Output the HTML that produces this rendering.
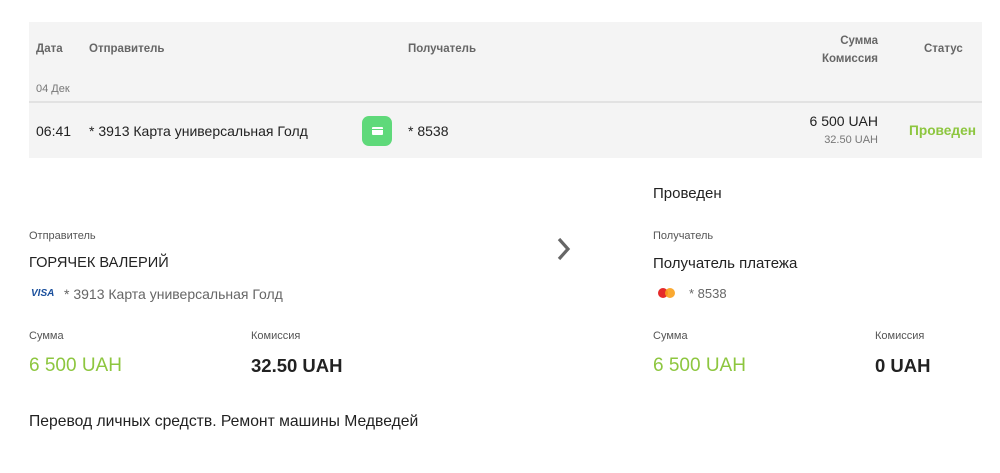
<!DOCTYPE html>
<html><head><meta charset="utf-8"><style>
*{margin:0;padding:0;box-sizing:border-box}
body{width:1000px;height:473px;background:#fff;font-family:"Liberation Sans",sans-serif;color:#222;position:relative;overflow:hidden}
.a{position:absolute;white-space:nowrap}
.panel{position:absolute;left:29px;top:22px;width:953px;height:136px;background:#f4f4f4}
.sep{position:absolute;left:29px;top:101px;width:953px;height:2px;background:#e2e2e2}
.h{font-size:11.5px;color:#666;font-weight:bold}
.g{color:#8dc63f}
</style></head><body>
<div class="panel"></div><div class="sep"></div>
<div class="a h" style="left:36px;top:43px">Дата</div>
<div class="a h" style="left:89px;top:43px">Отправитель</div>
<div class="a h" style="left:408px;top:43px">Получатель</div>
<div class="a h" style="left:760px;top:32px;width:118px;text-align:right;line-height:18px">Сумма<br>Комиссия</div>
<div class="a h" style="left:924px;top:43px">Статус</div>
<div class="a" style="left:36px;top:83px;font-size:11px;color:#777">04 Дек</div>
<div class="a" style="left:36px;top:123px;font-size:14px">06:41</div>
<div class="a" style="left:89px;top:123px;font-size:14px">* 3913 Карта универсальная Голд</div>
<div class="a" style="left:362px;top:116px;width:30px;height:30px;border-radius:7px;background:#5fd97a"><div style="position:absolute;left:10px;top:11px;width:11px;height:8px;background:#fff;border-radius:1px"></div><div style="position:absolute;left:10px;top:13px;width:11px;height:1px;background:#5fd97a"></div></div>
<div class="a" style="left:408px;top:123px;font-size:14px">* 8538</div>
<div class="a" style="left:760px;top:113px;width:118px;text-align:right;font-size:14px">6 500 UAH</div>
<div class="a" style="left:760px;top:134px;width:118px;text-align:right;font-size:11px;color:#777">32.50 UAH</div>
<div class="a g" style="left:909px;top:123px;font-size:13.7px;font-weight:bold">Проведен</div>

<div class="a" style="left:653px;top:185px;font-size:15px">Проведен</div>
<div class="a" style="left:29px;top:230px;font-size:11px;color:#555">Отправитель</div>
<div class="a" style="left:29px;top:255px;font-size:14.6px">ГОРЯЧЕК ВАЛЕРИЙ</div>
<div class="a" style="left:31px;top:288px;font-size:10px;font-weight:bold;font-style:italic;color:#1a4f9c">VISA</div>
<div class="a" style="left:64px;top:286px;font-size:14px;color:#666">* 3913 Карта универсальная Голд</div>
<svg class="a" style="left:555px;top:236px" width="18" height="26" viewBox="0 0 18 26"><path d="M4 3l9 10-9 10" fill="none" stroke="#666" stroke-width="3.2"/></svg>
<div class="a" style="left:653px;top:230px;font-size:11px;color:#555">Получатель</div>
<div class="a" style="left:653px;top:255px;font-size:15px">Получатель платежа</div>
<svg class="a" style="left:657px;top:287px" width="22" height="12"><circle cx="6" cy="6" r="5" fill="#e52a2a"/><circle cx="13" cy="6" r="5" fill="#f9a01b" opacity=".9"/></svg>
<div class="a" style="left:689px;top:286px;font-size:13px;color:#666">* 8538</div>

<div class="a" style="left:29px;top:330px;font-size:11px;color:#555">Сумма</div>
<div class="a g" style="left:29px;top:355px;font-size:19px">6 500 UAH</div>
<div class="a" style="left:251px;top:330px;font-size:11px;color:#555">Комиссия</div>
<div class="a" style="left:251px;top:355px;font-size:18.5px;font-weight:bold">32.50 UAH</div>
<div class="a" style="left:653px;top:330px;font-size:11px;color:#555">Сумма</div>
<div class="a g" style="left:653px;top:355px;font-size:19px">6 500 UAH</div>
<div class="a" style="left:875px;top:330px;font-size:11px;color:#555">Комиссия</div>
<div class="a" style="left:875px;top:355px;font-size:18.5px;font-weight:bold">0 UAH</div>
<div class="a" style="left:29px;top:413px;font-size:15.7px">Перевод личных средств. Ремонт машины Медведей</div>
</body></html>
